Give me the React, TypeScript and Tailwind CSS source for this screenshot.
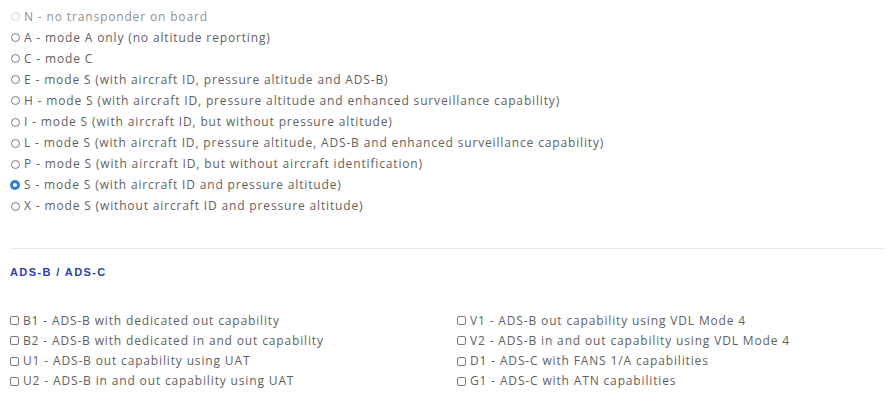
import React from "react";

const radios = [
  "N - no transponder on board",
  "A - mode A only (no altitude reporting)",
  "C - mode C",
  "E - mode S (with aircraft ID, pressure altitude and ADS-B)",
  "H - mode S (with aircraft ID, pressure altitude and enhanced surveillance capability)",
  "I - mode S (with aircraft ID, but without pressure altitude)",
  "L - mode S (with aircraft ID, pressure altitude, ADS-B and enhanced surveillance capability)",
  "P - mode S (with aircraft ID, but without aircraft identification)",
  "S - mode S (with aircraft ID and pressure altitude)",
  "X - mode S (without aircraft ID and pressure altitude)",
];

const left = [
  "B1 - ADS-B with dedicated out capability",
  "B2 - ADS-B with dedicated in and out capability",
  "U1 - ADS-B out capability using UAT",
  "U2 - ADS-B in and out capability using UAT",
];
const right = [
  "V1 - ADS-B out capability using VDL Mode 4",
  "V2 - ADS-B in and out capability using VDL Mode 4",
  "D1 - ADS-C with FANS 1/A capabilities",
  "G1 - ADS-C with ATN capabilities",
];

function Radio({ checked, disabled }: { checked?: boolean; disabled?: boolean }) {
  if (checked) {
    return (
      <span className="w-[10px] h-[10px] rounded-full bg-[#2f7de1] flex items-center justify-center shrink-0">
        <span className="w-[4px] h-[4px] rounded-full bg-white" />
      </span>
    );
  }
  return (
    <span
      className={
        "w-[9px] h-[9px] mx-[0.5px] rounded-full border shrink-0 " +
        (disabled ? "border-[#d4d4d4]" : "border-[#7a7a7a]")
      }
    />
  );
}

function Box() {
  return <span className="w-[9px] h-[9px] rounded-[2px] border border-[#7a7a7a] shrink-0" />;
}

export default function App() {
  return (
    <div
      className="bg-white w-[896px] h-[406px] pl-[10px] pt-[6px] text-[12px] tracking-[0.85px] text-[#5f5f5f]"
      style={{ fontFamily: '"Open Sans", sans-serif' }}
    >
      <div className="flex flex-col">
        {radios.map((r, i) => (
          <div key={r} className={"flex items-center gap-[4px] h-[21.1px] " + (i === 0 ? "text-[#8f8f8f]" : "")}>
            <Radio checked={i === 8} disabled={i === 0} />
            <span>{r}</span>
          </div>
        ))}
      </div>
      <div className="w-[874px] h-px bg-[#e8e8e8] mt-[31px]" />
      <div
        className="mt-[15px] text-[11px] font-bold text-[#2c3fa7] tracking-[1.4px]"
        style={{ fontFamily: '"Liberation Sans", Arial, sans-serif' }}
      >
        ADS-B / ADS-C
      </div>
      <div className="grid grid-cols-[447px_1fr] mt-[30px]">
        <div className="flex flex-col">
          {left.map((t) => (
            <div key={t} className="flex items-center gap-[4px] h-[20.3px]">
              <Box />
              <span>{t}</span>
            </div>
          ))}
        </div>
        <div className="flex flex-col">
          {right.map((t) => (
            <div key={t} className="flex items-center gap-[4px] h-[20.3px]">
              <Box />
              <span>{t}</span>
            </div>
          ))}
        </div>
      </div>
    </div>
  );
}
